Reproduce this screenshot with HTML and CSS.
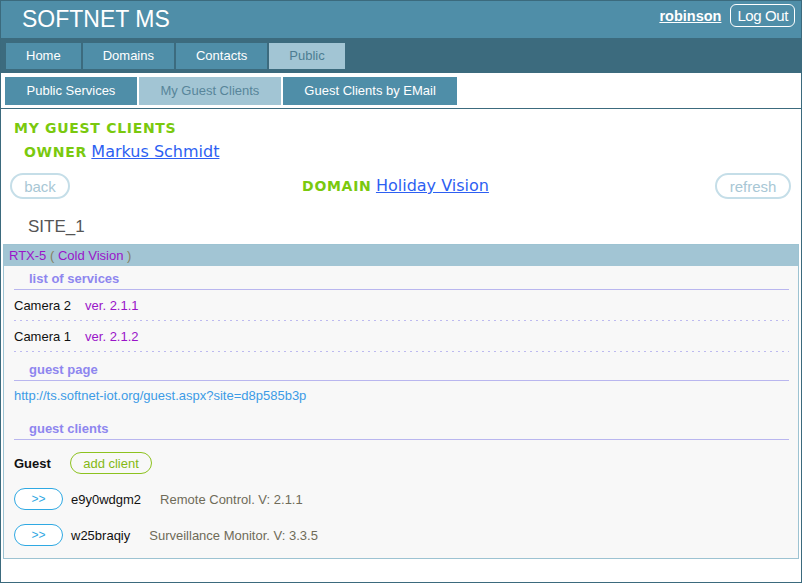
FILE: index.html
```html
<!DOCTYPE html>
<html>
<head>
<meta charset="utf-8">
<title>SOFTNET MS</title>
<link rel="stylesheet" href="styles.css">
</head>
<body>
<div class="page">
  <header class="topbar">
    <div class="brand">SOFTNET MS</div>
    <div class="user">
      <a class="username" href="#">robinson</a>
      <button class="logout">Log Out</button>
    </div>
  </header>
  <nav class="mainnav">
    <a class="tab" href="#">Home</a>
    <a class="tab" href="#">Domains</a>
    <a class="tab" href="#">Contacts</a>
    <a class="tab active" href="#">Public</a>
  </nav>
  <nav class="subnav">
    <a class="subtab" href="#">Public Services</a>
    <a class="subtab active" href="#">My Guest Clients</a>
    <a class="subtab" href="#">Guest Clients by EMail</a>
  </nav>
  <main class="content">
    <h1 class="title">MY GUEST CLIENTS</h1>
    <div class="owner"><span class="label">OWNER</span> <a class="biglink" href="#">Markus Schmidt</a></div>
    <div class="domain-row">
      <button class="pill back">back</button>
      <div class="domain"><span class="label">DOMAIN</span> <a class="biglink" href="#">Holiday Vision</a></div>
      <button class="pill refresh">refresh</button>
    </div>
    <div class="site">SITE_1</div>
    <section class="panel">
      <div class="panel-head"><span class="purple">RTX-5</span> <span class="paren">(</span> <span class="purple">Cold Vision</span> <span class="paren">)</span></div>
      <div class="panel-body">
        <div class="section-head first">list of services</div>
        <div class="service"><span class="svc-name">Camera 2</span><span class="ver">ver. 2.1.1</span></div>
        <div class="service"><span class="svc-name">Camera 1</span><span class="ver">ver. 2.1.2</span></div>
        <div class="section-head">guest page</div>
        <div class="url"><a href="#">http://ts.softnet-iot.org/guest.aspx?site=d8p585b3p</a></div>
        <div class="section-head">guest clients</div>
        <div class="guest-row"><span class="guest-label">Guest</span><button class="add">add client</button></div>
        <div class="client"><button class="go">&gt;&gt;</button><span class="code">e9y0wdgm2</span><span class="desc">Remote Control. V: 2.1.1</span></div>
        <div class="client"><button class="go">&gt;&gt;</button><span class="code">w25braqiy</span><span class="desc">Surveillance Monitor. V: 3.3.5</span></div>
      </div>
    </section>
  </main>
</div>
</body>
</html>
```
FILE: styles.css
```css
* { box-sizing: border-box; }
body { margin: 0; font-family: "Liberation Sans", Arial, sans-serif; background: #fff; }
a { text-decoration: none; }
button { font-family: "Liberation Sans", Arial, sans-serif; cursor: pointer; }

.page {
  width: 802px;
  height: 583px;
  border: 1px solid #3b6a7d;
  display: flex;
  flex-direction: column;
  background: #fff;
}

.topbar {
  height: 37px;
  flex: none;
  background: #4f8ea8;
  display: flex;
  justify-content: space-between;
  align-items: center;
  padding: 0 6px 0 21px;
}
.brand { color: #fff; font-size: 23px; }
.user {
  align-self: flex-start;
  margin-top: 3px;
  display: flex;
  align-items: center;
  gap: 9px;
}
.username { color: #fff; font-weight: bold; font-size: 14.5px; text-decoration: underline; }
.logout {
  height: 23px;
  padding: 0 6px;
  border: 1px solid #fff;
  border-radius: 6px;
  background: transparent;
  color: #fff;
  font-size: 15px;
  letter-spacing: -0.4px;
}

.mainnav {
  height: 35px;
  flex: none;
  background: #3c6b7e;
  padding: 5px 0 4px 5px;
  display: flex;
  gap: 2px;
}
.tab {
  height: 26px;
  line-height: 26px;
  padding: 0 20px;
  background: #4f8ea8;
  color: #fff;
  font-size: 13px;
}
.tab.active { background: #a2c5d4; color: #4d7d92; }

.subnav {
  height: 36px;
  flex: none;
  padding: 4px 0 3px 4px;
  border-bottom: 1px solid #3c6b7e;
  display: flex;
  gap: 2px;
}
.subtab {
  height: 28px;
  line-height: 28px;
  padding: 0 21.5px;
  background: #4f8ea8;
  color: #fff;
  font-size: 13px;
}
.subtab.active { background: #a2c5d4; color: #58859a; }

.content { flex: 1; padding: 0 2px; }

.title {
  margin: 0;
  height: 28px;
  padding: 10px 0 0 11px;
  font: bold 14px/18px "DejaVu Sans", Verdana, sans-serif;
  letter-spacing: 0.7px;
  color: #7ac90e;
}
.label {
  font: bold 14px "DejaVu Sans", Verdana, sans-serif;
  letter-spacing: 0.7px;
  color: #7ac90e;
}
.biglink {
  font: 16px "DejaVu Sans", Verdana, sans-serif;
  color: #2d5ff2;
  text-decoration: underline;
}
.owner {
  margin-top: 5px;
  height: 20px;
  line-height: 20px;
  padding-left: 21px;
}

.domain-row {
  margin-top: 11px;
  height: 26px;
  padding: 0 8px 0 7px;
  display: flex;
  justify-content: space-between;
  align-items: center;
}
.domain { margin-left: 6px; line-height: 20px; }
.pill {
  height: 26px;
  border: 2px solid #c5dee8;
  border-radius: 13px;
  background: #fff;
  color: #a8c7d5;
  font-size: 15px;
  padding: 0;
}
.pill.back { width: 60px; }
.pill.refresh { width: 76px; }

.site {
  margin-top: 17px;
  margin-bottom: 7px;
  padding-left: 25px;
  font-size: 17px;
  line-height: 21px;
  color: #555;
}

.panel {
  border: 1px solid #9dc3d2;
  background: #f8f8f8;
}
.panel-head {
  height: 21px;
  line-height: 21px;
  background: #a2c5d4;
  padding-left: 5px;
  font-size: 13px;
}
.purple { color: #9a14c9; }
.paren { color: #858062; }
.panel-body { padding: 0 9px 5px 10px; }

.section-head {
  padding: 10px 0 2px 15px;
  line-height: 16px;
  border-bottom: 1px solid #b9b6ef;
  font-weight: bold;
  font-size: 13px;
  color: #8e86ef;
}
.section-head.first { padding-top: 5px; }

.service {
  height: 31px;
  padding-bottom: 1px;
  display: flex;
  align-items: center;
  font-size: 13px;
  background: linear-gradient(to right, #bdbaf0 2px, transparent 2px) left bottom / 6px 1px repeat-x;
}
.svc-name { color: #111; }
.ver { margin-left: 14px; color: #9a14c9; }

.url { height: 30px; line-height: 30px; font-size: 13px; }
.url a { color: #3c9be6; }

.guest-row {
  padding: 12px 0 7px;
  display: flex;
  align-items: center;
}
.guest-label { font-weight: bold; font-size: 13px; color: #111; width: 56px; }
.add {
  height: 22px;
  width: 82px;
  padding: 0;
  border: 1px solid #8dc21f;
  border-radius: 11px;
  background: transparent;
  color: #84b815;
  font-size: 13px;
}

.client {
  height: 36px;
  display: flex;
  align-items: center;
  font-size: 13px;
}
.go {
  width: 49px;
  height: 22px;
  padding: 0;
  border: 1px solid #2fa9e3;
  border-radius: 11px;
  background: #fff;
  color: #2fa9e3;
  font-size: 12px;
}
.code { margin-left: 8px; color: #111; }
.desc { margin-left: 19px; color: #6f6b58; }
```
